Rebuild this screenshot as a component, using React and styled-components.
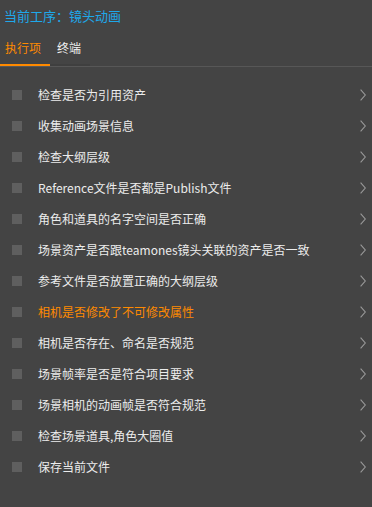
import React from "react";
import styled, { createGlobalStyle } from "styled-components";

const Global = createGlobalStyle`
  html, body { margin: 0; padding: 0; background: #444444; }
  body { font-family: "Noto Sans CJK SC", "Noto Sans", sans-serif; }
  * { box-sizing: border-box; }
`;

const Panel = styled.div`
  width: 372px;
  height: 507px;
  background: #444444;
  display: flex;
  flex-direction: column;
  overflow: hidden;
`;

const Title = styled.div`
  height: 30px;
  display: flex;
  align-items: center;
  padding-left: 4px;
  font-size: 13px;
  color: #1ea8ea;
`;

const TabBar = styled.div`
  display: flex;
  border-bottom: 1px solid #575757;
`;

const Tab = styled.div`
  height: 36px;
  display: flex;
  align-items: center;
  padding: 0 9px 0 ${(p) => (p.$active ? 5 : 7)}px;
  font-size: 12px;
  color: ${(p) => (p.$active ? "#ff8a00" : "#f0f0f0")};
  border-bottom: 2px solid ${(p) => (p.$active ? "#ff8a00" : "#3f3f3f")};
`;

const List = styled.div`
  padding-top: 12px;
  display: flex;
  flex-direction: column;
`;

const Row = styled.div`
  height: 31px;
  display: flex;
  align-items: center;
  padding: 0 6px 0 12px;
`;

const Box = styled.span`
  width: 10px;
  height: 10px;
  background: #5f5f5f;
  flex: none;
`;

const Label = styled.span`
  flex: 1;
  margin-left: 16px;
  font-size: 12px;
  color: ${(p) => (p.$warn ? "#ff8a00" : "#ececec")};
  white-space: nowrap;
`;

const Chevron = () => (
  <svg width="6" height="12" viewBox="0 0 6 12" style={{ flex: "none" }}>
    <path d="M0.6 0.6 L5.3 6 L0.6 11.4" fill="none" stroke="#9a9a9a" strokeWidth="1.1" />
  </svg>
);

const items = [
  "检查是否为引用资产",
  "收集动画场景信息",
  "检查大纲层级",
  "Reference文件是否都是Publish文件",
  "角色和道具的名字空间是否正确",
  "场景资产是否跟teamones镜头关联的资产是否一致",
  "参考文件是否放置正确的大纲层级",
  "相机是否修改了不可修改属性",
  "相机是否存在、命名是否规范",
  "场景帧率是否是符合项目要求",
  "场景相机的动画帧是否符合规范",
  "检查场景道具,角色大圈值",
  "保存当前文件",
];

export default function App() {
  return (
    <>
      <Global />
      <Panel>
        <Title>当前工序：镜头动画</Title>
        <TabBar>
          <Tab $active>执行项</Tab>
          <Tab>终端</Tab>
        </TabBar>
        <List>
          {items.map((t, i) => (
            <Row key={i}>
              <Box />
              <Label $warn={i === 7}>{t}</Label>
              <Chevron />
            </Row>
          ))}
        </List>
      </Panel>
    </>
  );
}
